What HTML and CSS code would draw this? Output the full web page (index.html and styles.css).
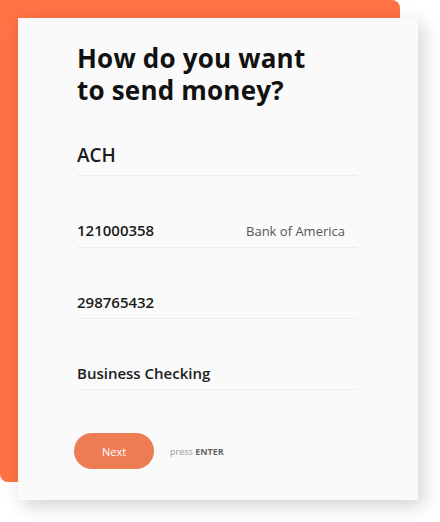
FILE: index.html
```html
<!DOCTYPE html>
<html>
<head>
<meta charset="utf-8">
<link rel="stylesheet" href="styles.css">
</head>
<body>
<div class="stage">
  <div class="back"></div>
  <main class="card">
    <h1 class="title">How do you want<br>to send money?</h1>
    <div class="field field-lg"><span>ACH</span></div>
    <div class="field"><span>121000358</span><span class="hint">Bank of America</span></div>
    <div class="field"><span>298765432</span></div>
    <div class="field"><span>Business Checking</span></div>
    <div class="actions">
      <button class="btn">Next</button>
      <span class="press">press <b>ENTER</b></span>
    </div>
  </main>
</div>
</body>
</html>
```
FILE: styles.css
```css
html, body {
  margin: 0;
  padding: 0;
  background: #ffffff;
}
body {
  width: 440px;
  height: 522px;
  overflow: hidden;
  font-family: "Open Sans", "Liberation Sans", sans-serif;
}
.stage {
  display: grid;
  grid-template-columns: 440px;
  grid-template-rows: 522px;
}
.back {
  grid-area: 1 / 1;
  width: 400px;
  height: 482px;
  background: #ff7245;
  border-radius: 0 8px 0 8px;
}
.card {
  grid-area: 1 / 1;
  align-self: start;
  margin: 18px 0 0 18px;
  width: 400px;
  height: 482px;
  box-sizing: border-box;
  background: #fafafa;
  padding: 24px 0 0 59px;
  box-shadow: 5px 6px 18px rgba(0, 0, 0, 0.18);
}
.title {
  margin: 0;
  font-size: 26px;
  line-height: 32px;
  font-weight: 700;
  color: #111;
  letter-spacing: 0.2px;
}
.field {
  width: 280px;
  display: flex;
  justify-content: space-between;
  align-items: baseline;
  border-bottom: 1px solid #ececec;
  padding: 44px 0 6px 0;
  font-size: 15px;
  line-height: 20px;
  font-weight: 600;
  color: #1c1c1c;
}
.field-lg {
  padding: 37px 0 8px 0;
  font-size: 19px;
  line-height: 24px;
  font-weight: 600;
}
.hint {
  font-size: 13px;
  font-weight: 400;
  color: #555;
  margin-right: 12px;
}
.actions {
  display: flex;
  align-items: center;
  gap: 16px;
  margin-top: 43px;
  margin-left: -3px;
}
.btn {
  width: 80px;
  height: 36px;
  border: none;
  border-radius: 18px;
  background: #ee7c53;
  color: #fff;
  font-family: inherit;
  font-size: 11px;
  padding: 0;
}
.press {
  font-size: 9px;
  color: #999;
}
.press b {
  color: #666;
  font-weight: 700;
}
```
